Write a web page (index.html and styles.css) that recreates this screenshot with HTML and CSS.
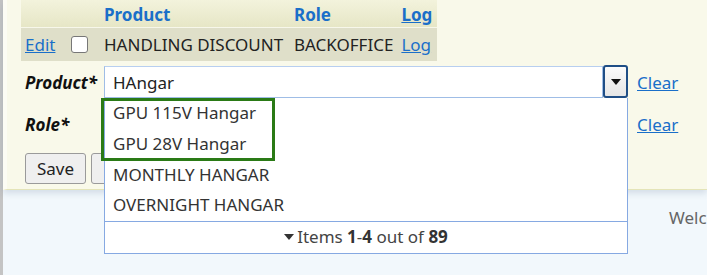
FILE: index.html
```html
<!DOCTYPE html>
<html lang="en">
<head>
    <meta charset="UTF-8">
    <title>Product Roles</title>
    <link rel="stylesheet" href="styles.css">
</head>
<body>
    <div class="page">
        <!-- edit panel -->
        <div class="panel">
            <table class="grid">
                <thead>
                    <tr>
                        <th class="col-edit"></th>
                        <th class="col-check"></th>
                        <th class="col-product">Product</th>
                        <th class="col-role">Role</th>
                        <th class="col-log"><a href="#">Log</a></th>
                    </tr>
                </thead>
                <tbody>
                    <tr>
                        <td><a href="#">Edit</a></td>
                        <td><span class="checkbox"></span></td>
                        <td>HANDLING DISCOUNT</td>
                        <td>BACKOFFICE</td>
                        <td><a href="#">Log</a></td>
                    </tr>
                </tbody>
            </table>

            <div class="form-row row-product">
                <label class="form-label">Product*</label>
                <div class="combo">
                    <input class="combo-input" type="text" value="HAngar">
                    <span class="combo-button"><span class="arrow"></span></span>
                </div>
                <a href="#" class="clear">Clear</a>
            </div>

            <div class="form-row row-role">
                <label class="form-label">Role*</label>
                <div class="combo combo-blank"></div>
                <a href="#" class="clear">Clear</a>
            </div>

            <div class="actions">
                <button class="btn">Save</button>
                <button class="btn btn-hidden"></button>
            </div>

            <!-- open autocomplete list -->
            <div class="dropdown">
                <div class="item">GPU 115V Hangar</div>
                <div class="item">GPU 28V Hangar</div>
                <div class="item">MONTHLY HANGAR</div>
                <div class="item">OVERNIGHT HANGAR</div>
                <div class="dropdown-footer"><span class="arrow"></span>Items <b>1</b>-<b>4</b> out of <b>89</b></div>
            </div>
            <div class="highlight"></div>
        </div>

        <div class="welcome">Welcome back</div>
    </div>
</body>
</html>
```

FILE: styles.css
```css
html, body {
    margin: 0;
    padding: 0;
}

body {
    font-family: "Segoe UI", "Noto Sans", "Open Sans", sans-serif;
    font-size: 17px;
    color: #222;
    background-color: #f2f8fc;
    width: 707px;
    height: 275px;
    overflow: hidden;
}

.page {
    border-left: 3px solid #c4c4c4;
    height: 275px;
    box-sizing: border-box;
}

a {
    color: #1a6fc9;
}

/* cream edit panel */
.panel {
    position: relative;
    height: 190px;
    box-sizing: border-box;
    padding-left: 18px;
    background-color: #f9f9ea;
    border-left: 4px solid #fcfcf4;
    border-bottom: 1px solid #e4e4b8;
    box-shadow: 0 3px 7px rgba(60, 90, 130, 0.18);
}

.grid {
    border-collapse: collapse;
    width: 416px;
    margin-left: -4px;
}

.grid th {
    height: 24px;
    padding: 3px 4px 0;
    text-align: left;
    font-weight: bold;
    color: #1a6fc9;
    background: linear-gradient(#f3f3dc, #e6e6c6);
    border-bottom: 1px solid #f7f7ea;
    line-height: 24px;
    vertical-align: top;
}

.grid th a {
    color: #1a6fc9;
}

.grid td {
    height: 33px;
    padding: 0 4px;
    background-color: #dfdfc9;
    white-space: nowrap;
}

.col-edit { width: 36px; }
.col-check { width: 27px; }
.col-product { width: 182px; }
.col-role { width: 99px; }

.checkbox {
    display: block;
    width: 15px;
    height: 15px;
    margin-left: 2px;
    border: 1px solid #777;
    border-radius: 3px;
    background-color: #fff;
}

/* form rows */
.form-row {
    display: flex;
    align-items: center;
    height: 32px;
}

.row-product {
    margin-top: 5px;
}

.row-role {
    margin-top: 10px;
}

.form-label {
    flex: none;
    width: 79px;
    font-weight: bold;
    font-style: italic;
    color: #111;
}

.combo {
    flex: none;
    display: flex;
    width: 524px;
    height: 32px;
}

.combo-input {
    flex: 1;
    min-width: 0;
    height: 32px;
    box-sizing: border-box;
    border: 1px solid #9fbde6;
    border-top-color: #b8cff0;
    padding: 0 8px;
    font: inherit;
    color: #222;
    background-color: #fff;
    outline: none;
}

.combo-button {
    width: 25px;
    height: 33px;
    box-sizing: border-box;
    border: 2px solid #1f4e86;
    border-radius: 3px;
    background: linear-gradient(#fbfbfb, #e6e6e6);
    display: flex;
    align-items: center;
    justify-content: center;
    margin-top: -1px;
}

.arrow {
    display: inline-block;
    width: 0;
    height: 0;
    border-left: 5px solid transparent;
    border-right: 5px solid transparent;
    border-top: 6px solid #111;
}

.clear {
    margin-left: 9px;
}

.actions {
    display: flex;
    gap: 5px;
    margin-top: 13px;
}

.btn {
    width: 61px;
    height: 31px;
    padding: 0;
    font: inherit;
    color: #222;
    background-color: #efefef;
    border: 1px solid #9a9a9a;
    border-radius: 3px;
}

.btn-hidden {
    width: 70px;
}

/* autocomplete list over the form */
.dropdown {
    position: absolute;
    left: 97px;
    top: 98px;
    width: 524px;
    box-sizing: border-box;
    background-color: #fff;
    border: 1px solid #86a9e2;
    border-top: none;
    color: #333;
    z-index: 2;
}

.item {
    height: 30.5px;
    line-height: 30px;
    padding-left: 8px;
    white-space: nowrap;
}

.item:first-child {
    height: 31px;
}

.dropdown-footer {
    height: 31px;
    line-height: 30px;
    text-align: center;
    border-top: 1px solid #86a9e2;
    color: #444;
}

.dropdown-footer .arrow {
    border-top-color: #333;
    margin-right: 3px;
    vertical-align: 3px;
}

.dropdown-footer b {
    color: #333;
}

.highlight {
    position: absolute;
    left: 94px;
    top: 98px;
    width: 174px;
    height: 63px;
    box-sizing: border-box;
    border: 3px solid #2a7a16;
    z-index: 3;
}

.welcome {
    padding: 16px 0 0 666px;
    white-space: nowrap;
    color: #666;
}
```
